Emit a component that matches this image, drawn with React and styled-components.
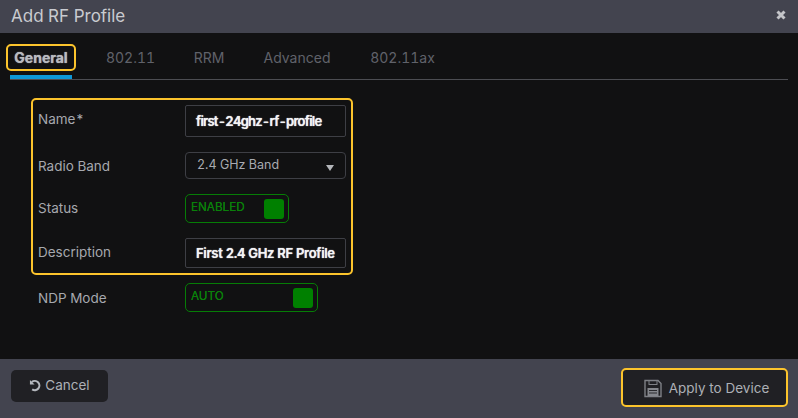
import React from 'react';
import styled, { createGlobalStyle } from 'styled-components';

const GlobalStyle = createGlobalStyle`
  html, body { margin: 0; padding: 0; background: #111112; }
  body {
    font-family: Inter, "Liberation Sans", sans-serif;
    font-variant-numeric: tabular-nums;
  }
`;

const YELLOW = '#fcc42c';

const Dialog = styled.div`
  width: 798px;
  height: 418px;
  display: flex;
  flex-direction: column;
  background: #111112;
  overflow: hidden;
`;

const Header = styled.header`
  height: 33px;
  flex: none;
  display: flex;
  align-items: center;
  justify-content: space-between;
  padding: 0 12px 0 11px;
  background: #43444f;
`;

const Title = styled.h1`
  margin: 0 0 1px;
  font-size: 17px;
  font-weight: 400;
  color: #c9cbd0;
`;

const CloseWrap = styled.span`
  display: flex;
  margin-bottom: 4px;
`;

const Body = styled.main`
  flex: 1;
  padding: 11px 10px 0 6px;
`;

const TabBar = styled.nav`
  display: flex;
  align-items: flex-start;
  height: 35px;
  margin-left: 4px;
  border-bottom: 1px solid #4c4d52;
`;

const Tab = styled.div`
  position: relative;
  height: 27px;
  display: flex;
  align-items: center;
  justify-content: center;
  width: ${p => p.$width}px;
  margin-right: ${p => p.$gap}px;
  font-size: 14px;
  color: #60626a;

  ${p => p.$active && `
    color: #b9bbc0;
    font-weight: 700;
    margin-left: -4px;
    width: 70px;
    border: 2px solid ${YELLOW};
    border-radius: 5px;
    box-sizing: border-box;
    text-shadow: 0 0 1px #b9bbc0;
    &::after {
      content: '';
      position: absolute;
      left: 2px;
      right: 2px;
      top: 29px;
      height: 4px;
      background: #0d98d8;
    }
  `}
`;

const Highlight = styled.section`
  width: 322px;
  height: 177px;
  box-sizing: border-box;
  margin: 18px 0 0 25px;
  padding: 5px 5px 0 5px;
  border: 2px solid ${YELLOW};
  border-radius: 5px;
`;

const Row = styled.div`
  display: flex;
  align-items: center;
  height: ${p => p.$height}px;
  margin-bottom: ${p => p.$gap || 0}px;
`;

const Label = styled.label`
  width: 147px;
  flex: none;
  font-size: 13.5px;
  color: #a6a8ae;
  position: relative;
  top: ${p => p.$shift || 0}px;
`;

const TextValue = styled.div`
  width: 161px;
  height: ${p => p.$height}px;
  box-sizing: border-box;
  display: flex;
  align-items: center;
  padding-left: 10px;
  border: 1px solid #3e3f45;
  border-radius: 2px;
  font-size: 13px;
  font-weight: 600;
  letter-spacing: ${p => p.$spacing ?? -0.3}px;
  color: #f4f4f6;
  text-shadow: 0 0 1px #f4f4f6;
  white-space: nowrap;
`;

const Select = styled(TextValue)`
  justify-content: space-between;
  padding: 0 11px 3px 11px;
  border-radius: 4px;
  font-size: 12.5px;
  font-weight: 400;
  letter-spacing: 0;
  color: #a8aab0;
  text-shadow: none;
`;

const Caret = styled.span`
  width: 0;
  height: 0;
  margin-top: 8px;
  border-left: 4px solid transparent;
  border-right: 4px solid transparent;
  border-top: 6px solid #b4b6bb;
`;

const Toggle = styled.div`
  width: ${p => p.$width}px;
  height: 29px;
  box-sizing: border-box;
  display: flex;
  align-items: center;
  justify-content: space-between;
  padding: 0 4px 0 5px;
  border: 1px solid #067d06;
  border-radius: 5px;
  font-size: 11.7px;
  color: #0a800a;
  text-shadow: 0 0 0.5px #0a800a;
`;

const ToggleLabel = styled.span`
  position: relative;
  top: -2px;
`;

const Knob = styled.span`
  width: 20px;
  height: 20px;
  border-radius: 3px;
  background: #008000;
`;

const Plain = styled.div`
  margin: 8px 0 0 32px;
`;

const Footer = styled.footer`
  height: 59px;
  flex: none;
  display: flex;
  align-items: flex-start;
  justify-content: space-between;
  padding: 0 10px 0 11px;
  background: #43444f;
`;

const Button = styled.button`
  display: flex;
  align-items: center;
  justify-content: center;
  box-sizing: border-box;
  gap: ${p => p.$gap}px;
  width: ${p => p.$width}px;
  height: ${p => p.$height}px;
  margin-top: ${p => p.$top}px;
  padding: ${p => p.$padding};
  background: #202024;
  color: #adb0b6;
  font-family: inherit;
  font-size: 13.5px;
  border: ${p => (p.$focus ? `2px solid ${YELLOW}` : '0')};
  border-radius: 5px;
`;

const CloseIcon = () => (
  <svg width="10" height="10" viewBox="0 0 10 10" aria-hidden="true">
    <path d="M1.5 1.5 L8.5 8.5 M8.5 1.5 L1.5 8.5" stroke="#c4c5c9" strokeWidth="3" />
  </svg>
);

const UndoIcon = () => (
  <svg width="13" height="13" viewBox="0 0 14 14" fill="none" aria-hidden="true">
    <path d="M3 3.2 A5 5 0 1 1 3.4 11.2" stroke="#b4b7bd" strokeWidth="2.2" />
    <path d="M1 1 L1 6 L6 6 Z" fill="#b4b7bd" />
  </svg>
);

const SaveIcon = () => (
  <svg width="18" height="19" viewBox="0 0 18 19" fill="none" aria-hidden="true">
    <path d="M1 1.5 H14 L17 4.5 V17.5 H1 Z" stroke="#7f8187" strokeWidth="1.4" />
    <rect x="5" y="1.5" width="8" height="4" stroke="#7f8187" />
    <rect x="3.5" y="9" width="11" height="8" fill="#85878d" />
    <path d="M5 11.5 H13 M5 14 H13" stroke="#2a2a2e" />
  </svg>
);

const App = () => {
  return (
    <>
      <GlobalStyle />
      <Dialog>
        <Header>
          <Title>Add RF Profile</Title>
          <CloseWrap><CloseIcon /></CloseWrap>
        </Header>
        <Body>
          <TabBar>
            <Tab $active $gap={30}>General</Tab>
            <Tab $width={49} $gap={38}>802.11</Tab>
            <Tab $width={32} $gap={38}>RRM</Tab>
            <Tab $width={68} $gap={39}>Advanced</Tab>
            <Tab $width={65} $gap={0}>802.11ax</Tab>
          </TabBar>
          <Highlight>
            <Row $height={32} $gap={15}>
              <Label $shift={-2}>Name*</Label>
              <TextValue $height={32} $spacing={-0.75}>first-24ghz-rf-profile</TextValue>
            </Row>
            <Row $height={27} $gap={15}>
              <Label>Radio Band</Label>
              <Select as="div" $height={27}>
                2.4 GHz Band
                <Caret />
              </Select>
            </Row>
            <Row $height={29} $gap={15}>
              <Label $shift={-1}>Status</Label>
              <Toggle $width={104}>
                <ToggleLabel>ENABLED</ToggleLabel>
                <Knob />
              </Toggle>
            </Row>
            <Row $height={30}>
              <Label $shift={-1}>Description</Label>
              <TextValue $height={30}>First 2.4 GHz RF Profile</TextValue>
            </Row>
          </Highlight>
          <Plain>
            <Row $height={29}>
              <Label>NDP Mode</Label>
              <Toggle $width={133}>
                <ToggleLabel>AUTO</ToggleLabel>
                <Knob />
              </Toggle>
            </Row>
          </Plain>
        </Body>
        <Footer>
          <Button $width={97} $height={32} $gap={3} $top={11} $padding="0 0 2px 0">
            <UndoIcon />
            Cancel
          </Button>
          <Button $focus $width={167} $height={39} $gap={7} $top={9} $padding="1px 0 0 4px">
            <SaveIcon />
            Apply to Device
          </Button>
        </Footer>
      </Dialog>
    </>
  );
};

export default App;
